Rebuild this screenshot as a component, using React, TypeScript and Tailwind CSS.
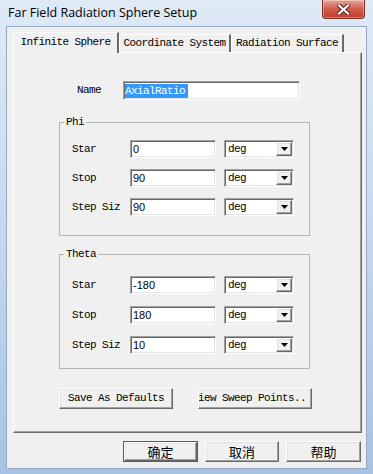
import React from 'react';

const mono = "font-['Liberation_Mono',monospace] text-[11px] tracking-[-0.6px] text-black";
const sunken =
  'bg-white border border-t-[#a0a0a0] border-l-[#a0a0a0] border-r-white border-b-white shadow-[inset_1px_1px_0_#696969,inset_-1px_-1px_0_#e3e3e3]';
const raised =
  'bg-[#f0f0f0] border border-t-white border-l-white border-r-[#696969] border-b-[#696969] shadow-[inset_-1px_-1px_0_#a0a0a0,inset_1px_1px_0_#e3e3e3]';

const CloseButton = () => (
  <div className="w-[43px] h-[19px] mr-[8px] rounded-b-[4px] border border-t-0 border-[#7a2f28] bg-gradient-to-b from-[#e6a596] via-[#cf5b4b] to-[#c0392b] flex items-center justify-center shadow-[inset_0_0_0_1px_rgba(255,255,255,0.35)]">
    <svg width="13" height="11" viewBox="0 0 13 11">
      <path d="M2 1.5 L11 9.5 M11 1.5 L2 9.5" stroke="#5a1f1a" strokeWidth="4" strokeLinecap="square" />
      <path d="M2 1.5 L11 9.5 M11 1.5 L2 9.5" stroke="#ffffff" strokeWidth="2.2" strokeLinecap="square" />
    </svg>
  </div>
);

const Tab = ({ label, active, width }: { label: string; active?: boolean; width: string }) => (
  <div
    className={
      active
        ? `${width} h-[21px] -mb-[1px] relative z-10 bg-[#f0f0f0] border-t border-l border-t-white border-l-white border-r-2 border-r-[#696969] flex items-center justify-center pb-[2px]`
        : `${width} h-[18px] bg-[#f0f0f0] border-t border-l border-t-white border-l-white border-r-2 border-r-[#696969] flex items-center justify-center`
    }
  >
    <span className={`${mono} whitespace-nowrap`}>{label}</span>
  </div>
);

const Dropdown = () => (
  <div className={`${sunken} w-[70px] h-[18px] flex items-center justify-between pl-[3px] pr-[1px]`}>
    <span className={mono}>deg</span>
    <div className={`${raised} w-[16px] h-[14px] flex items-center justify-center`}>
      <svg width="7" height="4" viewBox="0 0 7 4">
        <path d="M0 0 H7 L3.5 4 Z" fill="#000" />
      </svg>
    </div>
  </div>
);

const Row = ({ label, value }: { label: string; value: string }) => (
  <div className="flex items-center h-[18px]">
    <span className={`${mono} w-[58px] ml-[12px] whitespace-nowrap`}>{label}</span>
    <div className={`${sunken} w-[86px] h-[18px] flex items-center pl-[2px]`}>
      <span className="font-['Liberation_Sans',Arial,sans-serif] text-[11px] text-black leading-none">{value}</span>
    </div>
    <div className="ml-[8px]">
      <Dropdown />
    </div>
  </div>
);

const Group = ({ title, rows, pad }: { title: string; rows: [string, string][]; pad: string }) => (
  <fieldset className={`w-[251px] border border-[#b5b5b5] ${pad}`}>
    <legend className={`${mono} ml-[4px] px-[2px] leading-[12px]`}>{title}</legend>
    <div className={`flex flex-col ${title === 'Phi' ? 'gap-[11px]' : 'gap-[12px]'}`}>
      {rows.map(([l, v]) => (
        <Row key={l} label={l} value={v} />
      ))}
    </div>
  </fieldset>
);

const DlgButton = ({ children, def, width }: { children: React.ReactNode; def?: boolean; width: string }) => (
  <div className={`${width} h-[21px] ${def ? 'border border-[#5a5a5a]' : ''}`}>
    <div className={`${raised} w-full h-full flex items-center justify-center`}>
      <span className="font-['Noto_Sans_CJK_SC',sans-serif] text-[13px] leading-none text-black">{children}</span>
    </div>
  </div>
);

export default function App() {
  return (
    <div className="w-[373px] h-[474px] flex flex-col overflow-hidden bg-gradient-to-b from-[#dfeaf6] via-[#c5d8ee] to-[#a8c2e2]">
      {/* title bar */}
      <div className="h-[27px] shrink-0 flex items-start justify-between">
        <span className="pl-[8px] pt-[4px] font-['Open_Sans',sans-serif] text-[12.5px] leading-[17px] text-black">
          Far Field Radiation Sphere Setup
        </span>
        <CloseButton />
      </div>

      {/* client area */}
      <div className="ml-[7px] w-[359px] h-[441px] shrink-0 bg-[#f0f0f0] flex flex-col shadow-[0_0_0_1px_#94aac4]">
        {/* tabs */}
        <div className="mt-[5px] ml-[6px] h-[20px] flex items-end">
          <Tab label="Infinite Sphere" active width="w-[106px]" />
          <Tab label="Coordinate System" width="w-[112px]" />
          <Tab label="Radiation Surface" width="w-[113px]" />
        </div>

        {/* tab panel */}
        <div className="ml-[6px] w-[349px] h-[381px] border border-t-white border-l-white border-r-[#696969] border-b-[#696969] shadow-[inset_-1px_-1px_0_#a0a0a0] flex flex-col pl-[45px]">
          <div className="mt-[28px] h-[19px] flex items-center ml-[18px]">
            <span className={`${mono} w-[46px]`}>Name</span>
            <div className={`${sunken} w-[177px] h-[19px] flex items-center pl-[1px]`}>
              <span className={`${mono} bg-[#3399ff] text-white leading-[14px] pr-[3px]`}>AxialRatio</span>
            </div>
          </div>

          <div className="mt-[16px]">
            <Group
              title="Phi"
              pad="pt-[12px] pb-[19px]"
              rows={[
                ['Star', '0'],
                ['Stop', '90'],
                ['Step Siz', '90'],
              ]}
            />
          </div>

          <div className="mt-[12px]">
            <Group
              title="Theta"
              pad="pt-[16px] pb-[14px]"
              rows={[
                ['Star', '-180'],
                ['Stop', '180'],
                ['Step Siz', '10'],
              ]}
            />
          </div>

          <div className="mt-[19px] flex gap-[25px]">
            <div className={`${raised} w-[114px] h-[21px] flex items-center justify-center`}>
              <span className={`${mono} whitespace-nowrap`}>Save As Defaults</span>
            </div>
            <div className={`${raised} w-[114px] h-[21px] flex items-center justify-end overflow-hidden pr-[5px]`}>
              <span className={`${mono} whitespace-nowrap shrink-0`}>View Sweep Points..</span>
            </div>
          </div>
        </div>

        {/* OK / Cancel / Help */}
        <div className="mt-[8px] flex justify-end gap-[7px] pr-[5px]">
          <DlgButton def width="w-[75px]">确定</DlgButton>
          <DlgButton width="w-[74px]">取消</DlgButton>
          <DlgButton width="w-[75px]">帮助</DlgButton>
        </div>
      </div>
    </div>
  );
}
